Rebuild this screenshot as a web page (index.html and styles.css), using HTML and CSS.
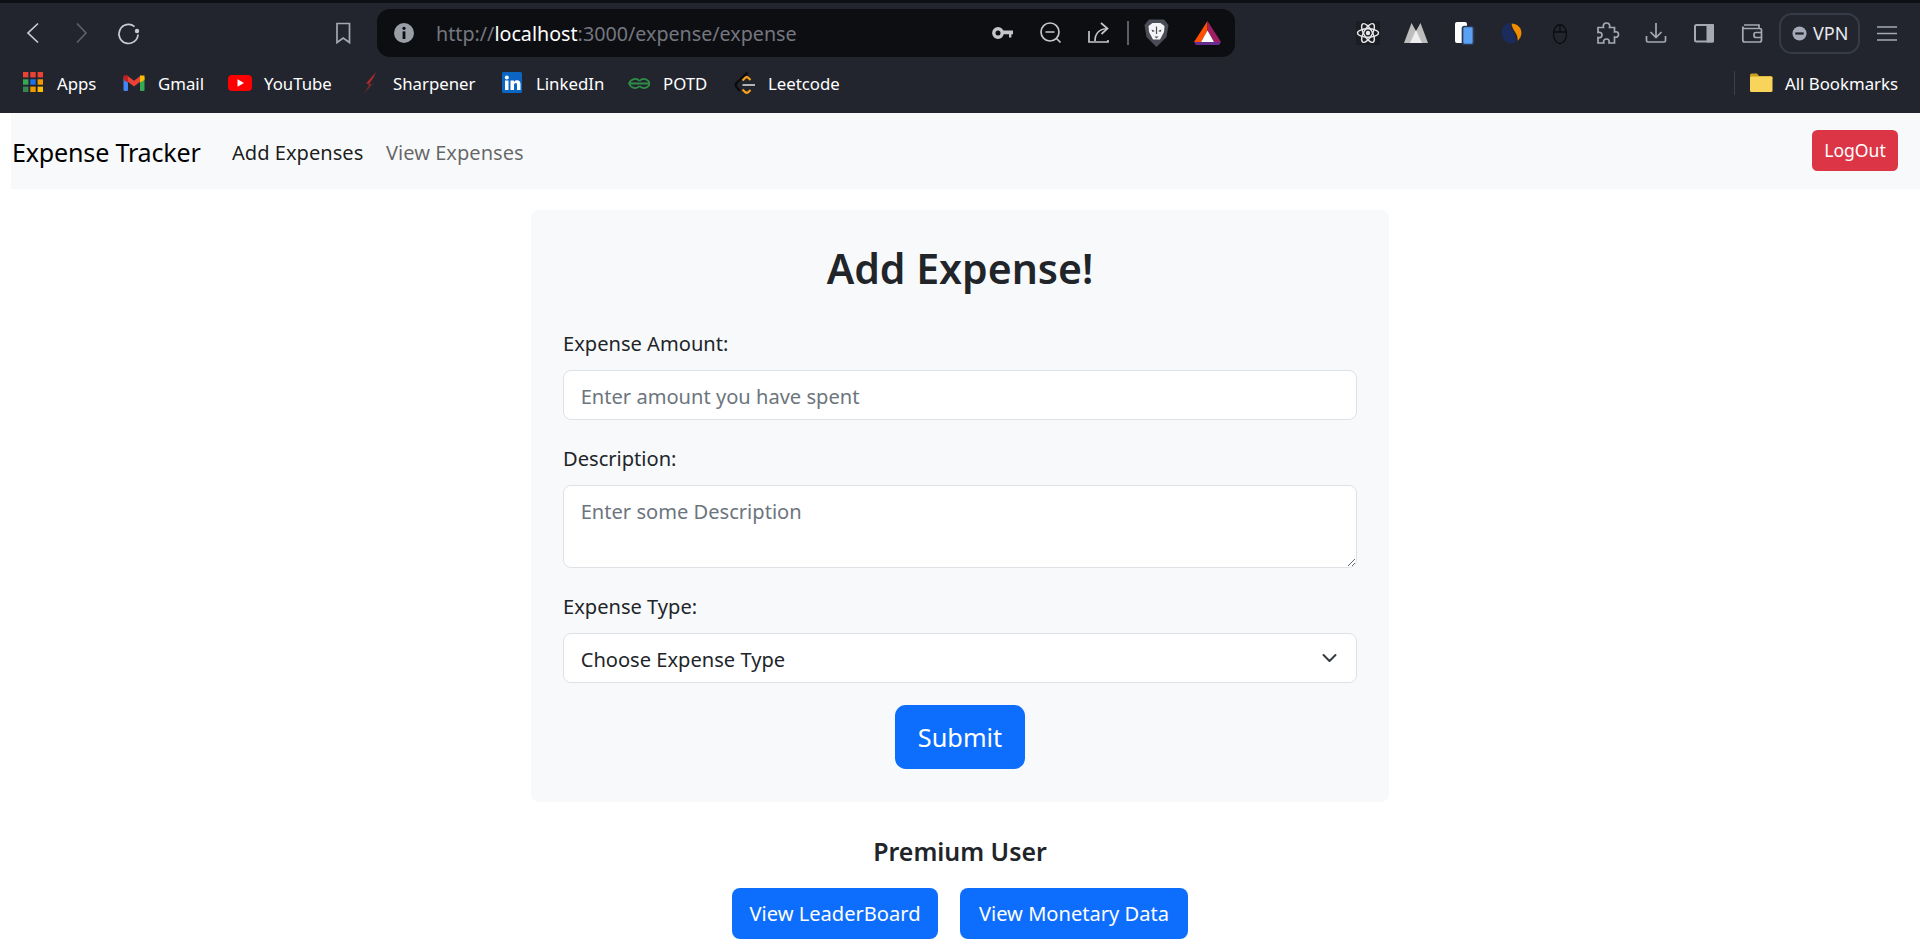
FILE: index.html
```html
<!DOCTYPE html>
<html lang="en">
<head>
<meta charset="utf-8">
<title>Expense Tracker</title>
<link rel="stylesheet" href="styles.css">
</head>
<body>
<header class="browser">
  <div class="toolbar">
    <div class="tb-btn"><svg class="ic" viewBox="0 0 32 32"><path d="M21 6.5L11 16L21 25.5" stroke="#c8ccd4"/></svg></div>
    <div class="tb-btn"><svg class="ic" viewBox="0 0 32 32"><path d="M12 6.5L21 16L12 25.5" stroke="#5c6069"/></svg></div>
    <div class="tb-btn"><svg class="ic" viewBox="0 0 32 32"><path d="M21.5 9.6A9.5 9.5 0 1 0 25 17.5" stroke="#c8ccd4"/><circle cx="24" cy="14" r="2.2" fill="#c8ccd4"/></svg></div>
    <div class="tb-btn bookmark-btn"><svg class="ic" viewBox="0 0 32 32"><path d="M10 6.5H22.5V25.5L16.2 21L10 25.5Z" stroke="#a5a9b3"/></svg></div>
    <div class="omnibox">
      <svg class="ic" viewBox="0 0 32 32"><circle cx="16" cy="16" r="10" fill="#9a9ea6"/><circle cx="16" cy="11.3" r="1.6" fill="#0d0e12"/><rect x="14.6" y="14.4" width="2.8" height="7.6" fill="#0d0e12"/></svg>
      <div class="url"><span class="url-dim">http://</span><span class="url-host">localhost</span><span class="url-dim">:3000/expense/expense</span></div>
      <svg class="ic" viewBox="0 0 32 32"><circle cx="11" cy="16" r="4.2" stroke="#c4c6ca" stroke-width="3.4"/><path d="M15 13.6H26V17.2H24.4V20.4H22V17.2H15Z" fill="#c4c6ca"/></svg>
      <svg class="ic om-lens" viewBox="0 0 32 32"><circle cx="14" cy="15" r="9" stroke="#c4c6ca"/><path d="M20.5 21.5L24.5 25.5M9.5 15H18.5" stroke="#c4c6ca"/></svg>
      <svg class="ic om-share" viewBox="0 0 32 32"><path d="M7 14V25H26V23M13 24C13 17 17 12 25 11.5M19 6L25.5 11.5L19.5 17" stroke="#c4c6ca"/></svg>
      <span class="om-sep"></span>
      <svg class="ic om-lion" viewBox="0 0 32 32"><path d="M8 2.5H23L27.5 8L25.5 20L15.5 30L5.5 20L3.5 8Z" fill="#4a4c58"/><path d="M7.5 9L11.5 6H19.5L23.5 9L23 15L19 22.5H12L8 15Z" fill="#f4f4f6"/><path d="M10.5 12.5L14 14L11.5 15ZM20.5 12.5L17 14L19.5 15ZM13.5 19.5H17.5L15.5 21.5ZM14.9 9.5H16.1V17H14.9Z" fill="#4a4c58"/></svg>
      <svg class="ic om-bat" viewBox="0 0 32 32"><path d="M15.5 4L2 25H9L15.5 13.5Z" fill="#ff5000"/><path d="M15.5 4L29 25H22L15.5 13.5Z" fill="#9e1f63"/><path d="M15.5 13.5L9 25H22Z" fill="#fff"/><path d="M2 25H29L27 28H4Z" fill="#662d91"/></svg>
    </div>
    <div class="tb-btn ext-first"><svg class="ic" viewBox="0 0 32 32"><rect x="4" y="4" width="24" height="24" fill="#1b1d24"/><g stroke="#e8e8e8" stroke-width="1.4"><ellipse cx="16" cy="16" rx="10.5" ry="4.2"/><ellipse cx="16" cy="16" rx="10.5" ry="4.2" transform="rotate(60 16 16)"/><ellipse cx="16" cy="16" rx="10.5" ry="4.2" transform="rotate(120 16 16)"/></g><circle cx="16" cy="16" r="2.2" fill="#e8e8e8"/></svg></div>
    <div class="tb-btn"><svg class="ic" viewBox="0 0 32 32"><path d="M4 26L11.5 6L16 14L20.5 6L28 26Z" fill="#bdbdbd"/><path d="M16 13L10 26H22Z" fill="#eeeeee"/></svg></div>
    <div class="tb-btn"><svg class="ic" viewBox="0 0 32 32"><rect x="7" y="5" width="12" height="21" rx="2" fill="#fff"/><rect x="14.5" y="9.5" width="11" height="18" rx="2" fill="#5aa0f5" stroke="#2c3a55"/></svg></div>
    <div class="tb-btn"><svg class="ic" viewBox="0 0 32 32"><circle cx="16" cy="16" r="10.5" fill="#1b2c5c"/><path d="M15 5.6A10.5 10.5 0 0 1 20 25.7C22 21 20 18 18 15C16 12 14 9 15 5.6Z" fill="#f08c00" stroke="#22252e"/></svg></div>
    <div class="tb-btn"><svg class="ic" viewBox="0 0 32 32"><ellipse cx="16" cy="17" rx="6.5" ry="9.5" stroke="#0c0d10" stroke-width="1.3"/><path d="M9.5 15H22.5M16 7.5V15" stroke="#0c0d10" stroke-width="1.3"/></svg></div>
    <div class="tb-btn"><svg class="ic" viewBox="0 0 32 32"><path d="M6 10.5H11.5C10.5 7.5 12.5 6 14.5 6S18.5 7.5 17.5 10.5H22.5V15C25.5 14.2 26.5 15.5 26.5 17.5S25 20.8 22.5 20V26H17C17.8 23.5 16.5 22 14.5 22S11 23.5 11.8 26H6V20.5C8.5 21.2 10 19.8 10 18S8.5 14.8 6 15.5Z" stroke="#a5a9b3"/></svg></div>
    <div class="tb-btn"><svg class="ic" viewBox="0 0 32 32"><path d="M16 6V20M10.5 15L16 20.5L21.5 15M6.5 19V23.5Q6.5 25 8 25H24Q25.5 25 25.5 23.5V19" stroke="#a5a9b3"/></svg></div>
    <div class="tb-btn"><svg class="ic" viewBox="0 0 32 32"><rect x="7" y="8" width="18" height="16.5" rx="1.5" stroke="#a5a9b3" stroke-width="2"/><rect x="18.5" y="7" width="7.5" height="18.5" rx="1" fill="#a5a9b3"/></svg></div>
    <div class="tb-btn"><svg class="ic" viewBox="0 0 32 32"><path d="M8 8H23V11.5M6.8 10V23Q6.8 25 8.8 25H23.5Q25.5 25 25.5 23V13Q25.5 11.5 23.5 11.5H8.5Q6.8 11.5 6.8 9.5M25.5 15.5H20Q18 15.5 18 17.5V18.5Q18 20.5 20 20.5H25.5" stroke="#a5a9b3"/></svg></div>
    <div class="vpn"><svg class="vpn-ic" viewBox="0 0 16 16"><circle cx="8" cy="8" r="7.5" fill="#a6aab8"/><rect x="3.5" y="6.8" width="9" height="2.4" fill="#22252e"/></svg><span>VPN</span></div>
    <div class="tb-btn menu-btn"><svg class="ic" viewBox="0 0 32 32"><path d="M6 10H26M6 16.5H26M6 23H26" stroke="#a5a9b3" stroke-width="1.5"/></svg></div>
  </div>
  <nav class="bookmarks">
    <a class="bm bm-apps"><svg class="bm-ic" viewBox="0 0 24 24"><g fill="#ea4335"><rect x="2" y="1" width="5.4" height="5.4"/><rect x="9.3" y="1" width="5.4" height="5.4"/><rect x="16.6" y="1" width="5.4" height="5.4"/></g><rect x="2" y="8.3" width="5.4" height="5.4" fill="#34a853"/><rect x="9.3" y="8.3" width="5.4" height="5.4" fill="#1a73e8"/><rect x="16.6" y="8.3" width="5.4" height="5.4" fill="#f29900"/><rect x="2" y="15.6" width="5.4" height="5.4" fill="#34884f"/><rect x="9.3" y="15.6" width="5.4" height="5.4" fill="#f29900"/><rect x="16.6" y="15.6" width="5.4" height="5.4" fill="#fbbc04"/></svg><span>Apps</span></a>
    <a class="bm bm-gmail"><svg class="bm-ic" viewBox="0 0 24 24"><rect x="1.5" y="6" width="4.5" height="14" rx="1" fill="#4285f4"/><rect x="18" y="6" width="4.5" height="14" rx="1" fill="#34a853"/><path d="M3.7 6.2L12 12.6L20.3 6.2" stroke="#ea4335" stroke-width="4.4" fill="none"/><path d="M18 4.6L22.5 4.6V9L18 11.5Z" fill="#fbbc04"/><path d="M1.5 4.6H6V11.5L1.5 9Z" fill="#c5221f"/></svg><span>Gmail</span></a>
    <a class="bm bm-yt"><svg class="bm-ic" viewBox="0 0 24 24"><rect y="4" width="24" height="16" rx="4" fill="#ff0000"/><path d="M9.5 8.3L16 12L9.5 15.7Z" fill="#fff"/></svg><span>YouTube</span></a>
    <a class="bm bm-sharp"><svg class="bm-ic" viewBox="0 0 24 24"><path d="M18 1L8 12.5L13 13L5.5 23.5L11 14.5L10.2 14.3L15.5 6.5Z" fill="#b02c2c"/><path d="M15.5 12L9 19" stroke="#5a3030" stroke-width="1"/></svg><span>Sharpener</span></a>
    <a class="bm bm-li"><svg class="bm-ic" viewBox="0 0 24 24"><rect x="2" y="1" width="20" height="21" rx="1.5" fill="#0a66c2"/><circle cx="6.8" cy="6.4" r="2" fill="#fff"/><rect x="5" y="9.5" width="3.5" height="9.5" fill="#fff"/><path d="M10.5 9.5H14V11C15 9.5 16.5 9.2 17.5 9.3C20 9.5 20.5 11.5 20.5 13.5V19H17V14C17 12.5 16.5 12 15.7 12C14.7 12 14 12.8 14 14V19H10.5Z" fill="#fff"/></svg><span>LinkedIn</span></a>
    <a class="bm bm-potd"><svg class="bm-ic" viewBox="0 0 24 24"><path d="M13.5 10C10.5 6.5 5 7.5 3 12.5C5 17.5 10.5 18.5 13.5 15M13.5 10C16.5 6.5 22 7.5 24 12.5C22 17.5 16.5 18.5 13.5 15M3 12.5H24" stroke="#2f8d46" stroke-width="1.8" fill="none"/></svg><span>POTD</span></a>
    <a class="bm bm-lc"><svg class="bm-ic" viewBox="0 0 24 24"><path d="M14.5 1.5L3.5 12Q2 14 3.5 16L7 20" stroke="#0b0b0b" stroke-width="2.2" fill="none"/><path d="M17.5 9L15 6.5Q13.5 5.5 12 7L9.5 9.5M9.5 18.5L12 21Q14 22.5 15.5 21L17.5 19" stroke="#f89f1b" stroke-width="2.2" fill="none"/><path d="M9.5 14H22" stroke="#b3b3b3" stroke-width="2"/></svg><span>Leetcode</span></a>
    <span class="bm-sep"></span>
    <a class="bm bm-all"><svg class="bm-ic" viewBox="0 0 24 24"><path d="M1 4Q1 2.5 2.5 2.5H8L10 5H22Q23.5 5 23.5 6.5V8H1Z" fill="#c9a020"/><rect x="1" y="5.5" width="22.5" height="15.5" rx="1.5" fill="#f9d45a"/></svg><span>All Bookmarks</span></a>
  </nav>
</header>

<nav class="navbar">
  <a class="brand">Expense Tracker</a>
  <a class="nav-link active">Add Expenses</a>
  <a class="nav-link">View Expenses</a>
  <button class="btn btn-danger btn-sm" type="button">LogOut</button>
</nav>

<main class="content">
  <form class="card">
    <h2 class="card-title">Add Expense!</h2>
    <div class="field">
      <label class="field-label" for="amt">Expense Amount:</label>
      <input class="control" id="amt" type="text" placeholder="Enter amount you have spent">
    </div>
    <div class="field">
      <label class="field-label" for="desc">Description:</label>
      <textarea class="control control-area" id="desc" placeholder="Enter some Description"></textarea>
    </div>
    <div class="field">
      <label class="field-label" for="type">Expense Type:</label>
      <select class="control control-select" id="type"><option>Choose Expense Type</option></select>
    </div>
    <div class="submit-row"><button class="btn btn-primary btn-lg" type="button">Submit</button></div>
  </form>

  <h5 class="premium-title">Premium User</h5>
  <div class="premium-actions">
    <button class="btn btn-primary btn-leader" type="button">View LeaderBoard</button>
    <button class="btn btn-primary btn-monetary" type="button">View Monetary Data</button>
  </div>
</main>
</body>
</html>
```
FILE: styles.css
```css
* { box-sizing: border-box; }
html, body { margin: 0; padding: 0; }
body {
  background: #fff;
  color: #212529;
  font-family: "Noto Sans", "Open Sans", sans-serif;
  font-size: 20.1px;
  overflow: hidden;
}
a { color: inherit; text-decoration: none; }

/* Browser chrome */
.browser { background: #22252e; border-top: 3px solid #0e1015; height: 113px; }
.toolbar { display: flex; align-items: center; height: 60px; padding-left: 9px; }
.tb-btn { flex: none; width: 48px; height: 48px; display: flex; align-items: center; justify-content: center; }
.ic { flex: none; width: 32px; height: 32px; display: block; fill: none; stroke-width: 1.7; }
.bookmark-btn { margin-left: 166px; }
.omnibox {
  flex: none; display: flex; align-items: center; width: 858px; height: 48px;
  margin-left: 10px; padding: 0 11px; background: #0d0e12; border-radius: 13px;
}
.url { flex: 1; margin-left: 16px; font-size: 19.7px; white-space: nowrap; }
.url-dim { color: #74777f; }
.url-host { color: #fff; }
.om-lens { margin-left: 17px; }
.om-share { margin-left: 14px; }
.om-sep { flex: none; width: 2px; height: 24px; margin-left: 13px; background: #5c5f66; }
.om-lion { margin-left: 12px; }
.om-bat { margin-left: 19px; }
.ext-first { margin-left: 109px; }
.vpn {
  flex: none; display: flex; align-items: center; width: 81px; height: 41px; margin-left: 3px;
  padding-left: 11px; border: 2px solid #373b47; border-radius: 13px; color: #e6e8ec; font-size: 18px;
}
.vpn-ic { width: 15px; height: 15px; margin-right: 6px; }
.menu-btn { margin-left: 3px; }

.bookmarks { display: flex; align-items: center; height: 40px; padding: 0 22px 0 21px; color: #fff; font-size: 16.8px; }
.bm { flex: none; display: flex; align-items: center; height: 24px; }
.bm-ic { flex: none; width: 24px; height: 24px; margin-right: 12px; }
.bm-apps { width: 101px; }
.bm-gmail { width: 106px; }
.bm-yt { width: 130px; }
.bm-sharp { width: 142px; }
.bm-sharp .bm-ic { margin-right: 11px; }
.bm-li { width: 126px; }
.bm-potd { width: 107px; }
.bm-potd .bm-ic { margin-right: 13px; }
.bm-lc .bm-ic { margin-right: 11px; }
.bm-sep { width: 1px; height: 24px; margin-left: auto; margin-right: 14px; background: #3c4049; }

/* Page */
.navbar { display: flex; align-items: center; height: 76px; margin-left: 11px; background: #f8f9fa; }
.brand { width: 221px; padding: 2px 0 0 1px; font-size: 25.1px; color: #000; letter-spacing: -0.2px; white-space: nowrap; }
.nav-link { width: 154px; padding-top: 2px; color: rgba(0, 0, 0, .6); white-space: nowrap; }
.nav-link.active { color: rgba(0, 0, 0, .9); }
.navbar .btn { margin: 0 22px 2px auto; }

.btn {
  border: 0; color: #fff; cursor: pointer; font-family: inherit; font-size: 20.1px;
  height: 51px; padding: 0 16px; border-radius: 8px;
}
.btn-primary { background: #0d6efd; }
.btn-danger { background: #dc3545; }
.btn-sm { width: 86px; height: 41px; padding: 0; font-size: 17.6px; border-radius: 5.5px; }
.btn-lg { width: 130px; height: 64px; padding: 0; font-size: 25.3px; border-radius: 10.7px; }
.btn-leader { width: 206px; }
.btn-monetary { width: 228px; }

.content { width: 858px; margin: 21px auto 0; }
.card { padding: 33px 32px 32.5px; background: #f8f9fa; border-radius: 8px; }
.card-title { margin: 0 0 33px; font-size: 41px; line-height: 51px; font-weight: 600; text-align: center; }
.field { margin-bottom: 22px; }
.field-label { display: block; margin-bottom: 9.7px; line-height: 33px; }
.control {
  display: block; width: 100%; height: 50.7px; padding: 2px 16.7px 0; background: #fff; color: #212529;
  border: 1.33px solid #dee2e6; border-radius: 8px; font-family: inherit; font-size: 20.1px;
}
.control::placeholder { color: #6c757d; opacity: 1; }
.control-area { height: 83px; padding-top: 10px; line-height: 32px; }
.control-select {
  appearance: none;
  background: #fff url("data:image/svg+xml,%3csvg xmlns='http://www.w3.org/2000/svg' viewBox='0 0 16 16'%3e%3cpath fill='none' stroke='%23343a40' stroke-linecap='round' stroke-linejoin='round' stroke-width='2' d='m2 5 6 6 6-6'/%3e%3c/svg%3e") no-repeat right 16px center / 21px 16px;
}
.submit-row { display: flex; justify-content: center; }
.premium-title { margin: 33px 0 21px; font-size: 24.9px; line-height: 32px; font-weight: 600; text-align: center; }
.premium-actions { display: flex; justify-content: center; gap: 22px; }
```
